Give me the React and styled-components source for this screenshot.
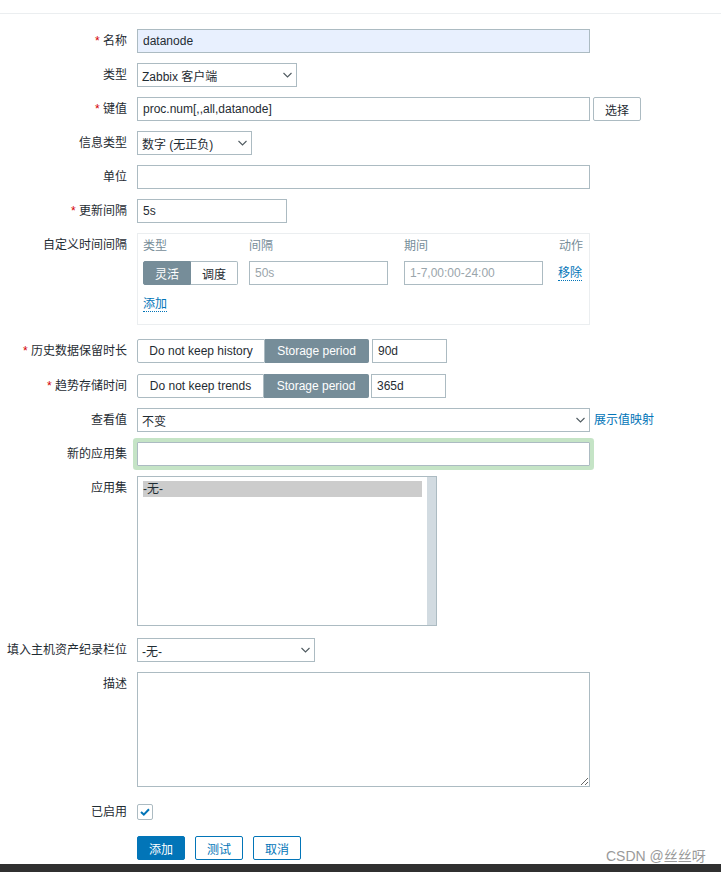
import React from "react";
import styled, { createGlobalStyle } from "styled-components";

const GlobalStyle = createGlobalStyle`
  html, body {
    margin: 0;
    padding: 0;
    background: #ffffff;
  }
  body {
    font-family: "Liberation Sans", Arial, "Noto Sans CJK SC", sans-serif;
    font-size: 12px;
    color: #1f2c33;
  }
`;

const Page = styled.div`
  position: relative;
  display: flex;
  flex-direction: column;
  height: 872px;
  overflow: hidden;
`;

const TopLine = styled.div`
  height: 13px;
  border-bottom: 1px solid #ebeef0;
  flex: none;
`;

const Form = styled.div`
  display: flex;
  flex-direction: column;
  padding-top: 5px;
`;

const Row = styled.div`
  display: flex;
  align-items: flex-start;
  gap: 10px;
  margin-top: ${(p) => (p.$mt ?? 10)}px;
`;

const Label = styled.div`
  width: 127px;
  flex: none;
  text-align: right;
  line-height: 24px;
  white-space: nowrap;
`;

const Star = styled.span`
  color: #d40000;
`;

const Field = styled.div`
  display: flex;
  align-items: center;
  gap: ${(p) => (p.$gap ?? 0)}px;
  min-height: 24px;
`;

const TextInput = styled.input`
  width: ${(p) => p.$w}px;
  height: 24px;
  box-sizing: border-box;
  margin: 0;
  padding: 0 5px;
  border: 1px solid #acbbc2;
  border-radius: ${(p) => (p.$focus ? "1px" : "0")};
  background: ${(p) => p.$bg || "#ffffff"};
  color: ${(p) => (p.$muted ? "#9aa5ab" : "#1f2c33")};
  font: inherit;
  outline: none;
  box-shadow: ${(p) => (p.$focus ? "0 0 0 4px #c5e4c6" : "none")};
`;

const SelectBox = styled.div`
  width: ${(p) => p.$w}px;
  height: 24px;
  box-sizing: border-box;
  border: 1px solid #acbbc2;
  padding: 0 4px;
  display: flex;
  align-items: center;
  justify-content: space-between;
  background: #ffffff;
  white-space: nowrap;
`;

const Chevron = () => (
  <svg width="9" height="6" viewBox="0 0 9 6">
    <path d="M0.5 1 L4.5 5 L8.5 1" fill="none" stroke="#4f5a60" strokeWidth="1.1" />
  </svg>
);

const Button = styled.button`
  width: 48px;
  height: 24px;
  box-sizing: border-box;
  margin: 0;
  padding: 0;
  border-radius: 2px;
  font: inherit;
  cursor: pointer;
  border: 1px solid ${(p) => (p.$primary ? "#0275b8" : p.$outline ? "#0275b8" : "#acbbc2")};
  background: ${(p) => (p.$primary ? "#0275b8" : "#ffffff")};
  color: ${(p) => (p.$primary ? "#ffffff" : p.$outline ? "#0275b8" : "#1f2c33")};
`;

const SegGroup = styled.div`
  display: flex;
`;

const Seg = styled.span`
  width: ${(p) => p.$w}px;
  height: 24px;
  box-sizing: border-box;
  display: flex;
  align-items: center;
  justify-content: center;
  white-space: nowrap;
  border: 1px solid ${(p) => (p.$active ? "#768d99" : "#acbbc2")};
  background: ${(p) => (p.$active ? "#768d99" : "#ffffff")};
  color: ${(p) => (p.$active ? "#ffffff" : "#1f2c33")};
  &:first-child {
    border-radius: 2px 0 0 2px;
  }
  &:last-child {
    border-radius: 0 2px 2px 0;
    border-left: none;
  }
`;

const Link = styled.a`
  color: #0275b8;
  text-decoration: none;
  border-bottom: ${(p) => (p.$plain ? "none" : "1px dotted #0275b8")};
  line-height: 15px;
  cursor: pointer;
  white-space: nowrap;
`;

const IntervalBox = styled.div`
  width: 453px;
  height: 92px;
  box-sizing: border-box;
  border: 1px solid #ebeef0;
  padding: 4px 6px 0 5px;
`;

const IntervalGrid = styled.div`
  display: grid;
  grid-template-columns: 106px 155px 154px auto;
  row-gap: 7px;
  align-items: center;
`;

const ColHead = styled.div`
  color: #768d99;
  line-height: 16px;
  text-align: ${(p) => (p.$right ? "right" : "left")};
`;

const AddRow = styled.div`
  margin-top: 11px;
  line-height: 16px;
`;

const ListBox = styled.div`
  width: 300px;
  height: 150px;
  box-sizing: border-box;
  border: 1px solid #acbbc2;
  display: flex;
`;

const ListOptions = styled.div`
  flex: 1;
  padding: 4px 5px;
`;

const ListOption = styled.div`
  line-height: 16px;
  background: ${(p) => (p.$selected ? "#cccccc" : "transparent")};
`;

const ScrollTrack = styled.div`
  width: 9px;
  background: #d2dbe1;
`;

const TextArea = styled.textarea`
  width: 453px;
  height: 115px;
  box-sizing: border-box;
  margin: 0;
  padding: 4px 5px;
  border: 1px solid #acbbc2;
  font: inherit;
  display: block;
  resize: both;
  outline: none;
`;

const CheckBox = styled.span`
  width: 16px;
  height: 16px;
  box-sizing: border-box;
  border: 1px solid #acbbc2;
  border-radius: 2px;
  display: flex;
  align-items: center;
  justify-content: center;
`;

const ButtonRow = styled.div`
  display: flex;
  gap: 10px;
`;

const Footer = styled.div`
  margin-top: 4px;
  flex: 1;
  background: #303030;
`;

const Watermark = styled.div`
  position: absolute;
  left: 606px;
  top: 847px;
  font-family: "Liberation Sans", Arial, "Noto Sans CJK SC", sans-serif;
  font-size: 14px;
  line-height: 18px;
  color: #9a9a9a;
  white-space: nowrap;
`;

const Req = ({ children }) => (
  <>
    <Star>*</Star> {children}
  </>
);

export default function App() {
  return (
    <Page>
      <GlobalStyle />
      <TopLine />
      <Form>
        <Row>
          <Label><Req>名称</Req></Label>
          <Field>
            <TextInput $w={453} $bg="#e8f0fe" defaultValue="datanode" />
          </Field>
        </Row>

        <Row>
          <Label>类型</Label>
          <Field>
            <SelectBox $w={160}>
              <span>Zabbix 客户端</span>
              <Chevron />
            </SelectBox>
          </Field>
        </Row>

        <Row>
          <Label><Req>键值</Req></Label>
          <Field $gap={3}>
            <TextInput $w={453} defaultValue="proc.num[,,all,datanode]" />
            <Button>选择</Button>
          </Field>
        </Row>

        <Row>
          <Label>信息类型</Label>
          <Field>
            <SelectBox $w={115}>
              <span>数字 (无正负)</span>
              <Chevron />
            </SelectBox>
          </Field>
        </Row>

        <Row>
          <Label>单位</Label>
          <Field>
            <TextInput $w={453} defaultValue="" />
          </Field>
        </Row>

        <Row>
          <Label><Req>更新间隔</Req></Label>
          <Field>
            <TextInput $w={150} defaultValue="5s" />
          </Field>
        </Row>

        <Row>
          <Label>自定义时间间隔</Label>
          <IntervalBox>
            <IntervalGrid>
              <ColHead>类型</ColHead>
              <ColHead>间隔</ColHead>
              <ColHead>期间</ColHead>
              <ColHead $right>动作</ColHead>

              <SegGroup>
                <Seg $w={48} $active>灵活</Seg>
                <Seg $w={47}>调度</Seg>
              </SegGroup>
              <TextInput $w={139} $muted defaultValue="50s" />
              <TextInput $w={139} $muted defaultValue="1-7,00:00-24:00" />
              <div>
                <Link>移除</Link>
              </div>
            </IntervalGrid>
            <AddRow>
              <Link>添加</Link>
            </AddRow>
          </IntervalBox>
        </Row>

        <Row $mt={14}>
          <Label><Req>历史数据保留时长</Req></Label>
          <Field $gap={3}>
            <SegGroup>
              <Seg $w={128}>Do not keep history</Seg>
              <Seg $w={104} $active>Storage period</Seg>
            </SegGroup>
            <TextInput $w={75} defaultValue="90d" />
          </Field>
        </Row>

        <Row $mt={11}>
          <Label><Req>趋势存储时间</Req></Label>
          <Field $gap={2}>
            <SegGroup>
              <Seg $w={127}>Do not keep trends</Seg>
              <Seg $w={105} $active>Storage period</Seg>
            </SegGroup>
            <TextInput $w={75} defaultValue="365d" />
          </Field>
        </Row>

        <Row>
          <Label>查看值</Label>
          <Field $gap={4}>
            <SelectBox $w={453}>
              <span>不变</span>
              <Chevron />
            </SelectBox>
            <Link $plain>展示值映射</Link>
          </Field>
        </Row>

        <Row>
          <Label>新的应用集</Label>
          <Field>
            <TextInput $w={453} $focus defaultValue="" />
          </Field>
        </Row>

        <Row>
          <Label>应用集</Label>
          <ListBox>
            <ListOptions>
              <ListOption $selected>-无-</ListOption>
            </ListOptions>
            <ScrollTrack />
          </ListBox>
        </Row>

        <Row $mt={12}>
          <Label>填入主机资产纪录栏位</Label>
          <Field>
            <SelectBox $w={178}>
              <span>-无-</span>
              <Chevron />
            </SelectBox>
          </Field>
        </Row>

        <Row>
          <Label>描述</Label>
          <TextArea defaultValue="" />
        </Row>

        <Row $mt={13}>
          <Label>已启用</Label>
          <Field>
            <CheckBox>
              <svg width="10" height="8" viewBox="0 0 10 8">
                <path d="M1 4 L3.8 6.6 L9 1.2" fill="none" stroke="#0275b8" strokeWidth="2" />
              </svg>
            </CheckBox>
          </Field>
        </Row>

        <Row $mt={12}>
          <Label />
          <ButtonRow>
            <Button $primary>添加</Button>
            <Button $outline>测试</Button>
            <Button $outline>取消</Button>
          </ButtonRow>
        </Row>
      </Form>
      <Footer />
      <Watermark>CSDN @丝丝呀</Watermark>
    </Page>
  );
}
